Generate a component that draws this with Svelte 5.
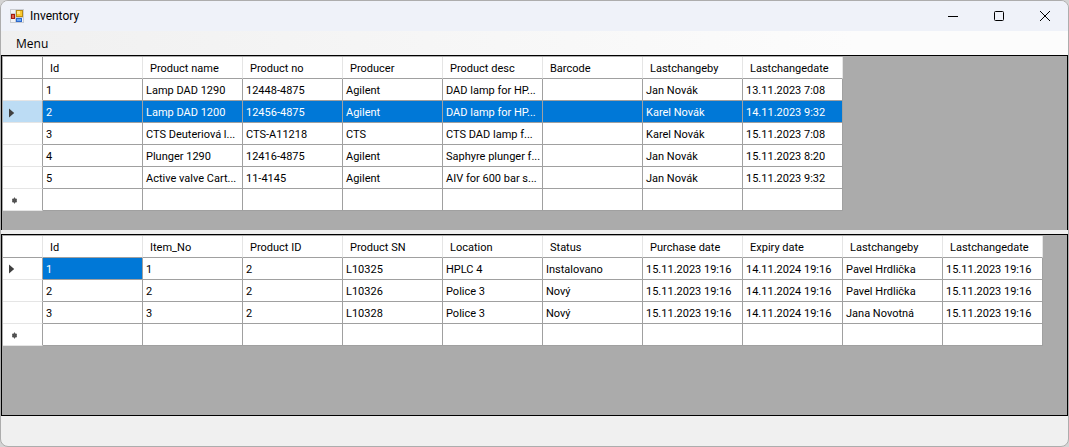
<script>
  const productColumns = ['Id', 'Product name', 'Product no', 'Producer', 'Product desc', 'Barcode', 'Lastchangeby', 'Lastchangedate'];
  const itemColumns = ['Id', 'Item_No', 'Product ID', 'Product SN', 'Location', 'Status', 'Purchase date', 'Expiry date', 'Lastchangeby', 'Lastchangedate'];

  const products = [
    ['1', 'Lamp DAD 1290', '12448-4875', 'Agilent', 'DAD lamp for HP...', '', 'Jan Novák', '13.11.2023 7:08'],
    ['2', 'Lamp DAD 1200', '12456-4875', 'Agilent', 'DAD lamp for HP...', '', 'Karel Novák', '14.11.2023 9:32'],
    ['3', 'CTS Deuteriová l...', 'CTS-A11218', 'CTS', 'CTS DAD lamp f...', '', 'Karel Novák', '15.11.2023 7:08'],
    ['4', 'Plunger 1290', '12416-4875', 'Agilent', 'Saphyre plunger f...', '', 'Jan Novák', '15.11.2023 8:20'],
    ['5', 'Active valve Cart...', '11-4145', 'Agilent', 'AIV for 600 bar s...', '', 'Jan Novák', '15.11.2023 9:32']
  ];

  const items = [
    ['1', '1', '2', 'L10325', 'HPLC 4', 'Instalovano', '15.11.2023 19:16', '14.11.2024 19:16', 'Pavel Hrdlička', '15.11.2023 19:16'],
    ['2', '2', '2', 'L10326', 'Police 3', 'Nový', '15.11.2023 19:16', '14.11.2024 19:16', 'Pavel Hrdlička', '15.11.2023 19:16'],
    ['3', '3', '2', 'L10328', 'Police 3', 'Nový', '15.11.2023 19:16', '14.11.2024 19:16', 'Jana Novotná', '15.11.2023 19:16']
  ];

  let selectedProduct = $state(1);
  let selectedItem = $state({ row: 0, col: 0 });
</script>

{#snippet arrow()}
  <svg class="mark" width="6" height="10" viewBox="0 0 6 10"><path d="M0 0.5 5.2 5 0 9.5z" fill="#404040" /></svg>
{/snippet}

{#snippet star()}
  <svg class="mark star" width="7" height="7" viewBox="0 0 7 7">
    <circle cx="3.5" cy="3.5" r="2.2" fill="#404040" />
    <path d="M3.5 0.5v6M1 2l5 3M6 2 1 5" stroke="#555" />
  </svg>
{/snippet}

{#snippet grid(name, columns, rows, current, isSelected, select, wholeRow)}
  <table aria-label={name} style="width: {40 + columns.length * 100}px">
    <thead>
      <tr>
        <th class="row-head"></th>
        {#each columns as column}
          <th>{column}</th>
        {/each}
      </tr>
    </thead>
    <tbody>
      {#each rows as row, r}
        <tr>
          <td class="row-head" class:active={wholeRow && r === current}>
            {#if r === current}{@render arrow()}{/if}
          </td>
          {#each row as value, c}
            <td class:selected={isSelected(r, c)} onclick={() => select(r, c)}>{value}</td>
          {/each}
        </tr>
      {/each}
      <tr>
        <td class="row-head">{@render star()}</td>
        {#each columns as _}
          <td></td>
        {/each}
      </tr>
    </tbody>
  </table>
{/snippet}

<div class="window">
  <header class="title-bar">
    <svg class="app-icon" width="14" height="14" viewBox="0 0 14 14">
      <rect width="14" height="14" fill="#c9ccd1" />
      <path d="M1 1h4v3H1zM1 10h4v3H1zM12 9h1v4h-1z" fill="#f1f3f6" />
      <rect x="6.5" y="1.5" width="6" height="6" fill="#fbc92f" stroke="#b98a10" />
      <rect x="7" y="2" width="3" height="3" fill="#ffe68a" />
      <rect x="1.5" y="5.5" width="3" height="4" fill="#e0604c" stroke="#a3190f" />
      <rect x="6.5" y="9.5" width="5" height="3" fill="#6aa8f5" stroke="#2d68cc" />
    </svg>
    <h1>Inventory</h1>
    <div class="caption-buttons">
      <button aria-label="Minimize">
        <svg width="12" height="12" viewBox="0 0 12 12"><path d="M1 6.5h10" stroke="#000" /></svg>
      </button>
      <button aria-label="Maximize">
        <svg width="12" height="12" viewBox="0 0 12 12"><rect x="1.5" y="1.5" width="9" height="9" rx="1" fill="none" stroke="#000" /></svg>
      </button>
      <button aria-label="Close">
        <svg width="12" height="12" viewBox="0 0 12 12"><path d="M1 1l10 10M11 1 1 11" stroke="#000" /></svg>
      </button>
    </div>
  </header>

  <nav class="menu-bar">
    <button>Menu</button>
  </nav>

  <section class="pane products">
    {@render grid('Products', productColumns, products, selectedProduct, (r) => r === selectedProduct, (r) => (selectedProduct = r), true)}
  </section>
  <div class="splitter"></div>
  <section class="pane items">
    {@render grid('Items', itemColumns, items, selectedItem.row, (r, c) => r === selectedItem.row && c === selectedItem.col, (r, c) => (selectedItem = { row: r, col: c }), false)}
  </section>

  <footer></footer>
</div>

<style>
  :global(body) {
    background: #d4d4d4;
  }

  .window {
    box-sizing: border-box;
    display: flex;
    flex-direction: column;
    min-height: 100vh;
    border: 1px solid #adadad;
    border-radius: 8px;
    background: #f0f0f0;
    overflow: hidden;
    font-family: "Open Sans", "Noto Sans", sans-serif;
    font-size: 12px;
    color: #000;
  }

  .title-bar {
    display: flex;
    align-items: center;
    height: 30px;
    background: #eff2f9;
  }

  .app-icon {
    margin: 0 6px 0 9px;
  }

  h1 {
    margin: 0;
    font-family: Roboto, sans-serif;
    font-size: 12px;
    font-weight: normal;
  }

  .caption-buttons {
    display: flex;
    margin-left: auto;
  }

  button {
    border: none;
    padding: 0;
    background: transparent;
    font: inherit;
    color: inherit;
  }

  .caption-buttons button {
    display: flex;
    align-items: center;
    justify-content: center;
    width: 46px;
    height: 30px;
  }

  .menu-bar {
    display: flex;
    height: 24px;
    padding: 0 9px;
    background: linear-gradient(to right, #f0f0f0, #fcfcfc 80%);
  }

  .menu-bar button {
    padding: 0 6px;
  }

  .pane {
    box-sizing: border-box;
    padding: 1px;
    border: 1px solid #000;
    background: #ababab;
    overflow: hidden;
  }

  .products {
    flex: 25 1 0;
    border-bottom: none;
  }

  .items {
    flex: 26 1 0;
  }

  .splitter {
    height: 4px;
    cursor: row-resize;
  }

  footer {
    height: 30px;
  }

  table {
    table-layout: fixed;
    border-collapse: separate;
    border-spacing: 0;
    font-family: Roboto, "Liberation Sans", sans-serif;
    font-size: 11px;
    line-height: 13px;
  }

  th, td {
    box-sizing: border-box;
    width: 100px;
    height: 22px;
    border-right: 1px solid #a0a0a0;
    border-bottom: 1px solid #a0a0a0;
    background: #fff;
    text-align: left;
    white-space: nowrap;
  }

  th {
    padding: 2px 1px 0 7px;
    border-right-color: #e5e5e5;
    font-weight: normal;
  }

  td {
    padding: 2px 1px 0 3px;
  }

  .row-head {
    width: 40px;
    padding: 2px 6px 0;
  }

  td.row-head {
    border-bottom-color: #e5e5e5;
  }

  .products .row-head {
    border-right-color: #a0a0a0;
  }

  .active {
    background: #bcdcf4;
  }

  .selected {
    background: #0078d7;
    color: #fff;
  }

  .mark {
    display: block;
  }

  .star {
    margin-left: 2px;
  }
</style>
